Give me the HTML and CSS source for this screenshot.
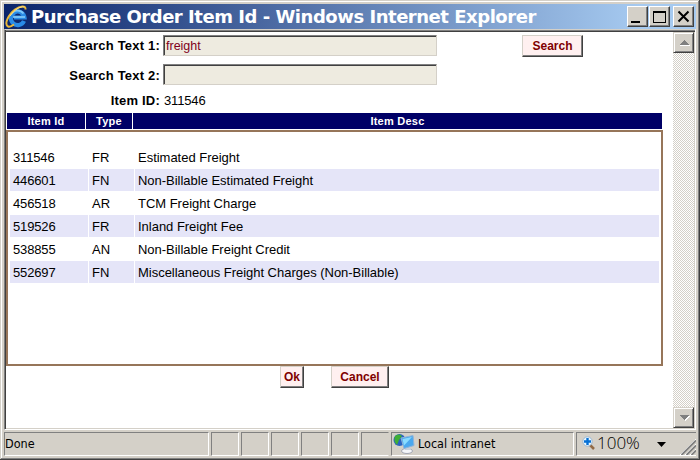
FILE: index.html
```html
<!DOCTYPE html>
<html lang="en">
<head>
<meta charset="utf-8">
<title>Purchase Order Item Id</title>
<link rel="stylesheet" href="styles.css">
</head>
<body>
<div class="window">
  <header class="titlebar">
    <svg class="ie" width="24" height="24" viewBox="0 0 24 24">
      <path d="M19 16A6.800 6.800 0 1 1 19.500 12.500H9" fill="none" stroke="#2a8be6" stroke-width="4.200"/>
      <path d="M6 9.500A7.500 7.500 0 0 1 18.500 8.500" fill="none" stroke="#7cc8fa" stroke-width="1.800"/>
      <path d="M8 12H20" stroke="#8ed2fb" stroke-width="1.500"/>
      <path d="M20.500 4.500C21 0 15 .8 10 4.500C3 10-1 19 3 21.500C5 22.500 7 21 9 19.500" fill="none" stroke="#e9b73a" stroke-width="2"/>
      <path d="M19.500 2C15 1 9 5 5 11" fill="none" stroke="#fbe48e" stroke-width="1"/>
    </svg>
    <h1>Purchase Order Item Id - Windows Internet Explorer</h1>
    <div class="controls">
      <span class="ctl"><svg width="19" height="19" shape-rendering="crispEdges"><path d="M3 14h9v2H3z"/></svg></span>
      <span class="ctl"><svg width="19" height="19" shape-rendering="crispEdges"><path d="M3 4h13v12H3zM4 6v9h11V6z" fill-rule="evenodd"/></svg></span>
      <span class="ctl close"><svg width="19" height="19"><path d="M4.500 4.500l10 10M14.500 4.500l-10 10" stroke="#000" stroke-width="2"/></svg></span>
    </div>
  </header>
  <div class="viewport">
    <main class="page">
      <div class="field first"><label>Search Text 1:</label><span class="input">freight</span><span class="btn search">Search</span></div>
      <div class="field second"><label>Search Text 2:</label><span class="input"></span></div>
      <div class="field third"><label>Item ID:</label><span class="value">311546</span></div>
      <div class="thead"><span>Item Id</span><span>Type</span><span>Item Desc</span></div>
      <div class="list">
        <div class="row"><span>311546</span><span>FR</span><span>Estimated Freight</span></div>
        <div class="row alt"><span>446601</span><span>FN</span><span>Non-Billable Estimated Freight</span></div>
        <div class="row"><span>456518</span><span>AR</span><span>TCM Freight Charge</span></div>
        <div class="row alt"><span>519526</span><span>FR</span><span>Inland Freight Fee</span></div>
        <div class="row"><span>538855</span><span>AN</span><span>Non-Billable Freight Credit</span></div>
        <div class="row alt"><span>552697</span><span>FN</span><span>Miscellaneous Freight Charges (Non-Billable)</span></div>
      </div>
      <div class="actions"><span class="btn ok">Ok</span><span class="btn cancel">Cancel</span></div>
    </main>
    <div class="scrollbar">
      <span class="arrow"><svg width="17" height="17" shape-rendering="crispEdges"><path d="M6 12h10v1H6z" fill="#fff"/><path d="M5 12L10 7l5 5z" fill="#808080"/></svg></span>
      <span class="arrow"><svg width="17" height="17" shape-rendering="crispEdges"><path d="M6 8h10l-5 5z" fill="#fff"/><path d="M5 7h10l-5 5z" fill="#808080"/></svg></span>
    </div>
  </div>
  <footer class="status">
    <span class="pane done"><span>Done</span></span>
    <span class="pane small"></span><span class="pane small"></span><span class="pane small"></span><span class="pane small"></span><span class="pane small"></span><span class="pane small open"></span>
    <span class="pane zone">
      <svg width="22" height="22" viewBox="0 0 22 22">
        <ellipse cx="14" cy="18" rx="5.500" ry="2.500" fill="#f4f6fa" stroke="#a4a8b4"/>
        <path d="M12 13h5l1 4h-6z" fill="#c8d0dc"/>
        <circle cx="6.500" cy="7" r="6" fill="#2a62c0"/>
        <path d="M2 3Q6 0 9 3L6 7 4 12Q0 8 2 3z" fill="#3fae35"/>
        <path d="M8 5L20 2.500l1 10L11 15.500z" fill="#4aa8ee" stroke="#8fb4d8"/>
        <path d="M9.500 6L19 4 11 12.500z" fill="#8adcff"/>
      </svg><span>Local intranet</span>
    </span>
    <span class="pane zoom">
      <svg class="lens" width="14" height="14" viewBox="0 0 14 14"><path d="M8 9l4 4" stroke="#936a45" stroke-width="2.500"/><circle cx="5.500" cy="5.500" r="4.700" fill="#e8f7ff" stroke="#9ab5d1"/><path d="M5.500 2v7M2 5.500h7" stroke="#0670d5" stroke-width="2.400"/></svg>
      <span class="pct">100%</span>
      <svg class="drop" width="9" height="5"><path d="M0 0h9L4.500 5z"/></svg>
      <svg class="grip" width="16" height="16"><path d="M0 16L16 0M5 16L16 5M10 16l6-6" stroke="#fff"/><path d="M1.500 16L16 1.500M6.500 16L16 6.500M11.500 16l4.500-4.500" stroke="#808080" stroke-width="1.800"/></svg>
    </span>
  </footer>
</div>
</body>
</html>
```
FILE: styles.css
```css
* { box-sizing: border-box; }
body { margin: 0; font: 13px "Liberation Sans", Arial, sans-serif; color: #000; }
svg { display: block; flex: none; }
.window {
  width: 700px; height: 460px; background: #d4d0c8; overflow: hidden;
  border-right: 1px solid #404040; border-bottom: 1px solid #404040;
  box-shadow: inset 1px 1px #d4d0c8, inset -1px -1px #808080, inset 2px 2px #fff;
  display: flex; flex-direction: column; padding: 4px 3px 3px 4px;
}
.titlebar {
  height: 25px; flex: none; display: flex; align-items: center;
  background: linear-gradient(90deg, #0a246a, #a6caf0 92%);
  padding-right: 2px;
}
.ie { margin-left: 1px; }
h1 {
  margin: 0 0 0 2px; color: #fff; white-space: nowrap; letter-spacing: -.47px;
  font: bold 18px/26px "DejaVu Sans", Verdana, sans-serif; flex: 1;
}
.controls { display: flex; gap: 1px; }
.ctl {
  width: 21px; height: 21px; background: #d4d0c8; border: 1px solid;
  border-color: #fff #404040 #404040 #fff; box-shadow: inset -1px -1px #808080;
}
.close { margin-left: 2px; }
.viewport {
  height: 401px; flex: none; display: flex; border: 1px solid;
  border-color: #d4d0c8 #fff #fff #808080;
  box-shadow: inset 1px 0 #404040, inset 0 1px #808080, inset 0 2px #404040, inset -1px -1px #d4d0c8;
  padding: 2px 1px 1px 1px; background: #fff;
}
.page { flex: 1; }
.field { display: flex; }
.field label { width: 154px; text-align: right; font-weight: bold; line-height: 22px; font-size: 13px; letter-spacing: .2px; white-space: nowrap; }
.first { padding-top: 3px; }
.second { padding-top: 7px; height: 28px; }
.second label { line-height: 23px; }
.third { padding-top: 5px; height: 28px; }
.input {
  width: 274px; height: 21px; margin-left: 3px; background: #eeebe0; color: #800020;
  border: 1px solid; border-color: #808080 #d4d0c8 #d4d0c8 #808080;
  box-shadow: inset 1px 1px #404040; padding-left: 2px; line-height: 21px; font-size: 12.500px;
}
.third label, .value { line-height: 21px; }
.value { margin-left: 4px; letter-spacing: -.15px; }
.btn {
  display: block; height: 22px; background: #fff0f0; color: #800000; font-weight: bold; font-size: 12px;
  text-align: center; line-height: 20px; border: 1px solid; border-color: #d4d0c8 #404040 #404040 #d4d0c8;
  box-shadow: inset -1px -1px #808080;
}
.search { width: 61px; margin-left: 85px; }
.thead { display: grid; grid-template-columns: 78px 46px 1fr; gap: 1px; width: 655px; margin: 0 0 1px 1px; }
.thead span { height: 16px; background: #000066; color: #fff; font-weight: bold; font-size: 11px; line-height: 16px; text-align: center; letter-spacing: .25px; }
.list { width: 657px; height: 236px; border: 2px solid #967559; padding: 14px 2px 0; }
.row { display: grid; grid-template-columns: 78px 45px 1fr; gap: 1px; height: 22px; margin-bottom: 1px; line-height: 24px; font-size: 13px; }
.row span { padding-left: 3px; white-space: nowrap; height: 22px; letter-spacing: -.02px; }
.row span:first-child { letter-spacing: -.15px; }
.alt span { background: #e5e5f8; }
.actions { display: flex; }
.ok { width: 24px; margin-left: 274px; }
.cancel { width: 58px; margin-left: 27px; }
.scrollbar {
  width: 21px; display: flex; flex-direction: column; justify-content: space-between;
  background: repeating-conic-gradient(#d4d0c8 0 25%, #fff 0 50%) 0 0 / 2px 2px;
}
.arrow {
  width: 21px; height: 21px; background: #d4d0c8; border: 1px solid;
  border-color: #d4d0c8 #404040 #404040 #d4d0c8; box-shadow: inset 1px 1px #fff, inset -1px -1px #808080;
}
.status {
  display: flex; gap: 2px; height: 24px; flex: none; margin-top: 2px;
  font: 12.500px/22px "DejaVu Sans Condensed", "DejaVu Sans", Tahoma, sans-serif;
}
.pane { display: flex; align-items: center; border: 1px solid; border-color: #808080 #fff #fff #808080; white-space: nowrap; }
.done { width: 205px; }
.small { width: 28px; }
.open { border-right-color: #d4d0c8; }
.zone { width: 183px; padding-left: 1px; gap: 3px; }
.zoom { flex: 1; border-right: 0; padding-left: 5px; }
.lens { margin-bottom: 3px; }
.pct { width: 43px; font: 300 17px/20px "Open Sans", "DejaVu Sans", Verdana, sans-serif; margin: 0 0 2px 1px; }
.drop { margin-left: 17px; }
.grip { margin-left: auto; align-self: flex-end; }
```
